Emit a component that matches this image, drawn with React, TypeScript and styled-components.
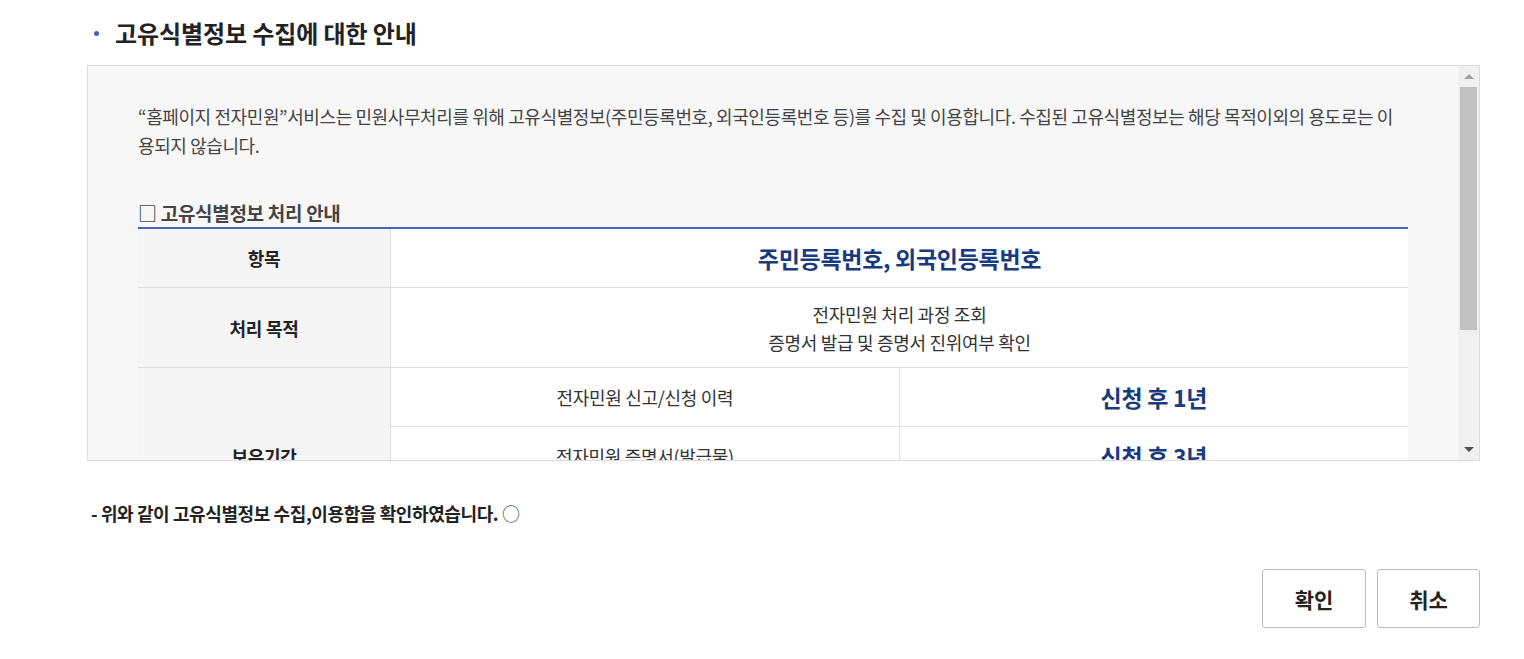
import styled, { createGlobalStyle } from "styled-components";

const GlobalStyle = createGlobalStyle`
    html, body {
        margin: 0;
        padding: 0;
        background: #fff;
    }
    body {
        font-family: "Noto Sans CJK KR", "Noto Sans", sans-serif;
        color: #333;
    }
`;

const Page = styled.div`
    width: 1393px;
    margin-left: 87px;
    padding-top: 16px;
`;

const Title = styled.h2`
    display: flex;
    align-items: center;
    gap: 16px;
    margin: 0 0 15px;
    font-size: 24px;
    line-height: 34px;
    font-weight: 700;
    letter-spacing: -0.1px;
    color: #222;
`;

const Dot = styled.span`
    width: 5px;
    height: 5px;
    margin-left: 7px;
    border-radius: 50%;
    background: #4a5fae;
`;

// the box with its own drawn scrollbar (native ones are hidden in the screenshot)
const ScrollBox = styled.div`
    display: flex;
    height: 394px;
    border: 1px solid #dcdcdc;
    background: #f7f7f7;
`;

const Viewport = styled.div`
    flex: 1;
    overflow: hidden;
    padding: 36px 50px 0 50px;
`;

const Scrollbar = styled.div`
    display: flex;
    flex-direction: column;
    width: 21px;
    background: #f0f0f0;
`;

const Arrow = styled.div<{ $down?: boolean }>`
    height: 21px;
    display: flex;
    align-items: center;
    justify-content: center;
    &::after {
        content: "";
        border-left: 5px solid transparent;
        border-right: 5px solid transparent;
        ${(p) =>
            p.$down
                ? "border-top: 5px solid #505050;"
                : "border-bottom: 5px solid #a3a3a3;"}
    }
`;

const Track = styled.div`
    flex: 1;
    padding: 0 2px;
`;

const Thumb = styled.div`
    height: 243px;
    background: #c1c1c1;
`;

const Lead = styled.p`
    margin: 0;
    font-size: 18px;
    line-height: 29px;
    color: #444;
    letter-spacing: -0.4px;
`;

const SubTitle = styled.h3`
    margin: 40px 0 0;
    padding-bottom: 1px;
    font-size: 19px;
    line-height: 26px;
    font-weight: 700;
    color: #444;
    letter-spacing: -0.3px;
`;

const Table = styled.table`
    width: 100%;
    border-collapse: collapse;
    table-layout: fixed;
    border-top: 2px solid #4b63b0;
`;

const Th = styled.th`
    width: 252px;
    padding: 0;
    background: #f5f5f5;
    border-bottom: 1px solid #e0e0e0;
    border-right: 1px solid #e0e0e0;
    font-size: 18px;
    font-weight: 700;
    color: #222;
    text-align: center;
    letter-spacing: -0.3px;
`;

const Td = styled.td<{ $h?: number; $strong?: boolean }>`
    height: ${(p) => p.$h || 58}px;
    padding: 0;
    background: #fff;
    border-bottom: 1px solid #e0e0e0;
    border-right: 1px solid #e0e0e0;
    text-align: center;
    font-size: ${(p) => (p.$strong ? "23px" : "18px")};
    font-weight: ${(p) => (p.$strong ? 700 : 400)};
    color: ${(p) => (p.$strong ? "#1a3a7e" : "#333")};
    line-height: ${(p) => (p.$strong ? "30px" : "28px")};
    letter-spacing: -0.3px;
    &:last-child {
        border-right: none;
    }
`;

const Agree = styled.p`
    margin: 39px 0 0 4px;
    font-size: 18px;
    line-height: 26px;
    font-weight: 700;
    color: #222;
    letter-spacing: -0.4px;
`;

const Circle = styled.span`
    font-weight: 400;
    color: #555;
`;

const Buttons = styled.div`
    display: flex;
    justify-content: flex-end;
    gap: 11px;
    margin-top: 43px;
`;

const Button = styled.button<{ $w: number }>`
    width: ${(p) => p.$w}px;
    height: 59px;
    border: 1px solid #bdbdbd;
    border-radius: 3px;
    background: #fff;
    font-family: "Noto Sans CJK KR", "Noto Sans", sans-serif;
    font-size: 21px;
    font-weight: 700;
    color: #222;
    cursor: pointer;
`;

const periods = [
    { name: "전자민원 신고/신청 이력", keep: "신청 후 1년" },
    { name: "전자민원 증명서(발급물)", keep: "신청 후 3년" },
    { name: "전자민원 수수료 납부 내역", keep: "신청 후 5년" },
];

const App = () => {
    return (
        <>
            <GlobalStyle />
            <Page>
                <Title>
                    <Dot />
                    고유식별정보 수집에 대한 안내
                </Title>
                <ScrollBox>
                    <Viewport>
                        <Lead>
                            “홈페이지 전자민원”서비스는 민원사무처리를 위해 고유식별정보(주민등록번호, 외국인등록번호 등)를 수집 및 이용합니다. 수집된 고유식별정보는 해당 목적이외의 용도로는 이용되지 않습니다.
                        </Lead>
                        <SubTitle>□ 고유식별정보 처리 안내</SubTitle>
                        <Table>
                            <tbody>
                                <tr>
                                    <Th>항목</Th>
                                    <Td colSpan={2} $strong>
                                        주민등록번호, 외국인등록번호
                                    </Td>
                                </tr>
                                <tr>
                                    <Th>처리 목적</Th>
                                    <Td colSpan={2} $h={79}>
                                        전자민원 처리 과정 조회
                                        <br />
                                        증명서 발급 및 증명서 진위여부 확인
                                    </Td>
                                </tr>
                                {periods.map((row, i) => (
                                    <tr key={row.name}>
                                        {i === 0 && <Th rowSpan={periods.length}>보유기간</Th>}
                                        <Td>{row.name}</Td>
                                        <Td $strong>{row.keep}</Td>
                                    </tr>
                                ))}
                            </tbody>
                        </Table>
                    </Viewport>
                    <Scrollbar>
                        <Arrow />
                        <Track>
                            <Thumb />
                        </Track>
                        <Arrow $down />
                    </Scrollbar>
                </ScrollBox>
                <Agree>
                    - 위와 같이 고유식별정보 수집,이용함을 확인하였습니다. <Circle>○</Circle>
                </Agree>
                <Buttons>
                    <Button $w={104}>확인</Button>
                    <Button $w={103}>취소</Button>
                </Buttons>
            </Page>
        </>
    );
};

export default App;
